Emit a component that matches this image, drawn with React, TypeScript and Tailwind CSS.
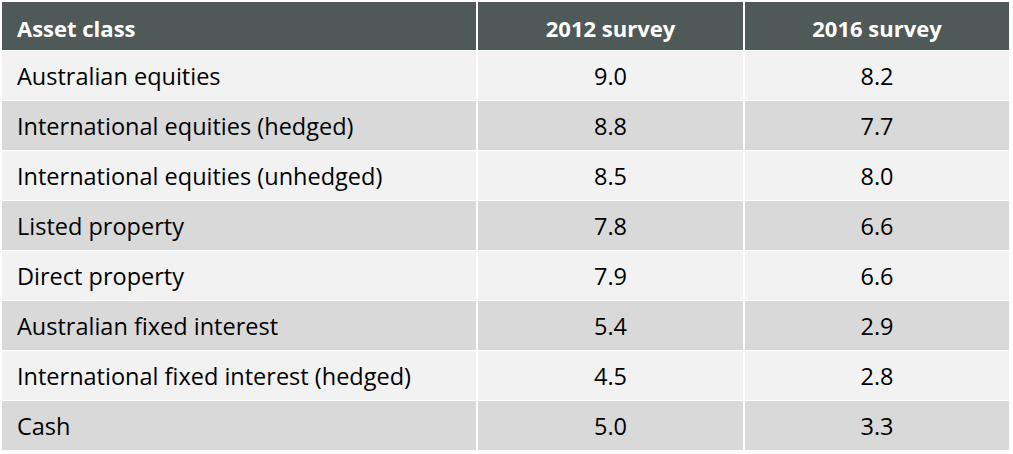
const ROWS: [string, string, string][] = [
  ["Australian equities", "9.0", "8.2"],
  ["International equities (hedged)", "8.8", "7.7"],
  ["International equities (unhedged)", "8.5", "8.0"],
  ["Listed property", "7.8", "6.6"],
  ["Direct property", "7.9", "6.6"],
  ["Australian fixed interest", "5.4", "2.9"],
  ["International fixed interest (hedged)", "4.5", "2.8"],
  ["Cash", "5.0", "3.3"],
];

export default function App() {
  return (
    <div className="w-[1013px] h-[454px] bg-white pl-[2px] pt-[2px] font-['Open_Sans',sans-serif] overflow-hidden">
      <div className="w-[1007px] grid grid-cols-[474px_265px_264px] gap-x-[2px] gap-y-[1px] bg-white">
        {/* Header */}
        <div className="h-[48px] bg-[#4f5957] text-white font-bold text-[22px] flex items-center pl-[15px] pt-[4px]">
          Asset class
        </div>
        <div className="h-[48px] bg-[#4f5957] text-white font-bold text-[22px] flex items-center justify-center pt-[4px]">
          2012 survey
        </div>
        <div className="h-[48px] bg-[#4f5957] text-white font-bold text-[22px] flex items-center justify-center pt-[4px]">
          2016 survey
        </div>

        {ROWS.map(([label, a, b], i) => {
          const bg = i % 2 === 0 ? "bg-[#f2f2f2]" : "bg-[#d9d9d9]";
          return [
            <div key={label + "l"} className={`h-[49px] ${bg} text-black text-[23.5px] flex items-center pl-[15px] pt-[3px]`}>
              {label}
            </div>,
            <div key={label + "a"} className={`h-[49px] ${bg} text-black text-[23.5px] flex items-center justify-center pt-[3px]`}>
              {a}
            </div>,
            <div key={label + "b"} className={`h-[49px] ${bg} text-black text-[23.5px] flex items-center justify-center pt-[3px]`}>
              {b}
            </div>,
          ];
        })}
      </div>
    </div>
  );
}
